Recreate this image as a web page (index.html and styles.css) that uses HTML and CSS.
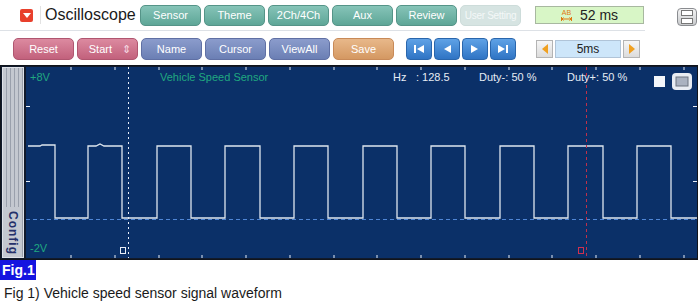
FILE: index.html
```
<html>
    <head>
        <link rel="stylesheet" href="styles.css">
    </head>
    <body>
        <div class="toolbar">
            <div class="row row-top">
                <span class="menu-icon"><span class="tri"></span></span>
                <span class="title">Oscilloscope</span>
                <span class="btn teal">Sensor</span>
                <span class="btn teal">Theme</span>
                <span class="btn teal">2Ch/4Ch</span>
                <span class="btn teal">Aux</span>
                <span class="btn teal">Review</span>
                <span class="btn faded">User Setting</span>
                <span class="ab-box"><span class="ab"><span>AB</span><svg width="11" height="4" viewBox="0 0 11 4"><path d="M0.5 0v4 M10.5 0v4 M1 2h9 M2.5 0.5 L1 2 L2.5 3.5 M8.5 0.5 L10 2 L8.5 3.5" stroke="#e07810" fill="none" stroke-width="1"/></svg></span>52 ms</span>
                <span class="win-icon"><span></span><span></span></span>
            </div>
            <div class="row row-bottom">
                <span class="btn pink">Reset</span>
                <span class="btn pink start">Start <span class="updown">&#8661;</span></span>
                <span class="btn slate">Name</span>
                <span class="btn slate">Cursor</span>
                <span class="btn slate">ViewAll</span>
                <span class="btn orange">Save</span>
                <div class="nav">
                    <span class="nav-btn"><svg width="12" height="10" viewBox="0 0 12 10"><rect x="1" y="1" width="2" height="8" fill="#fff"/><path d="M11 1 L4 5 L11 9 Z" fill="#fff"/></svg></span>
                    <span class="nav-btn"><svg width="12" height="10" viewBox="0 0 12 10"><path d="M10 1 L3 5 L10 9 Z" fill="#fff"/></svg></span>
                    <span class="nav-btn"><svg width="12" height="10" viewBox="0 0 12 10"><path d="M2 1 L9 5 L2 9 Z" fill="#fff"/></svg></span>
                    <span class="nav-btn"><svg width="12" height="10" viewBox="0 0 12 10"><path d="M1 1 L8 5 L1 9 Z" fill="#fff"/><rect x="9" y="1" width="2" height="8" fill="#fff"/></svg></span>
                </div>
                <div class="time">
                    <span class="arrow-btn"><svg width="8" height="12" viewBox="0 0 8 12"><path d="M7 1 L1 6 L7 11 Z" fill="#f0a020"/></svg></span>
                    <span class="time-val">5ms</span>
                    <span class="arrow-btn"><svg width="8" height="12" viewBox="0 0 8 12"><path d="M1 1 L7 6 L1 11 Z" fill="#f0a020"/></svg></span>
                </div>
            </div>
        </div>
        <div class="scope">
            <div class="config"><span>Config</span></div>
            <div class="plot">
                <svg width="671" height="191" viewBox="0 0 671 191">
                    <g stroke="#e8eef8" stroke-width="1">
                        <path d="M45 0v3 M89 0v3 M133 0v3 M176 0v3 M220 0v3 M264 0v3 M308 0v3 M351 0v3 M395 0v3 M439 0v3 M483 0v3 M526 0v3 M570 0v3 M614 0v3 M658 0v3"/>
                        <path d="M45 191v-3 M89 191v-3 M133 191v-3 M176 191v-3 M220 191v-3 M264 191v-3 M308 191v-3 M351 191v-3 M395 191v-3 M439 191v-3 M483 191v-3 M526 191v-3 M570 191v-3 M614 191v-3 M658 191v-3"/>
                        <path d="M0 39.5h4 M0 114.5h4 M671 39.5h-4 M671 114.5h-4"/>
                    </g>
                    <line x1="0" y1="152.5" x2="671" y2="152.5" stroke="#4f86d6" stroke-dasharray="4 3"/>
                    <path d="M2 79 H14 L16 78 H29 V151 H62 V79 H70 L74 77 L78 79 H96 V151 H131 V79 H165 V151 H199 V79 H234 V151 H268 V79 H302 V151 H337 V79 H371 V151 H405 V79 H439 V151 H474 V79 H508 V151 H542 V79 H577 V151 H611 V79 H645 V151 H671" fill="none" stroke="#dfe6ee" stroke-width="1.3"/>
                    <line x1="102.5" y1="0" x2="102.5" y2="191" stroke="#e8eef8" stroke-dasharray="2 3"/>
                    <line x1="560.5" y1="0" x2="560.5" y2="191" stroke="#c0304a" stroke-dasharray="3 3"/>
                    <rect x="94.5" y="180.5" width="5" height="6" fill="none" stroke="#e8eef8"/>
                    <rect x="552.5" y="180.5" width="5" height="6" fill="none" stroke="#d03050"/>
                    <text x="4" y="14" class="green">+8V</text>
                    <text x="134" y="14" class="green">Vehicle Speed Sensor</text>
                    <text x="367" y="14" class="info">Hz</text>
                    <text x="390" y="14" class="info">: 128.5</text>
                    <text x="453" y="14" class="info">Duty-: 50 %</text>
                    <text x="541" y="14" class="info">Duty+: 50 %</text>
                    <text x="4" y="185" class="green">-2V</text>
                    <rect x="628" y="9" width="11" height="11" fill="#f4f6fa"/>
                    <rect x="646" y="6" width="20" height="17" rx="4" fill="#e8ecf2"/>
                    <rect x="650" y="10" width="12" height="9" fill="#aab2c0" stroke="#6c7480"/>
                </svg>
            </div>
        </div>
        <div class="fig">Fig.1</div>
        <p class="caption">Fig 1) Vehicle speed sensor signal waveform</p>
    </body>
</html>
```
FILE: styles.css
```
body{
    margin: 0;
    background-color: #fff;
    font-family: "Liberation Sans", Arial, sans-serif;
    width: 700px;
    height: 305px;
    overflow: hidden;
}
.toolbar{
    height: 65px;
}
.row{
    display: flex;
    align-items: center;
}
.row-top{
    height: 30px;
    width: 645px;
    border-bottom: 1px solid #dde1e6;
    position: relative;
}
.row-bottom{
    height: 30px;
    padding-left: 13px;
    padding-top: 3px;
}
.menu-icon{
    width: 13px;
    height: 13px;
    margin-left: 20px;
    background: #e8402c;
    border-radius: 2px;
    display: flex;
    justify-content: center;
    align-items: center;
}
.tri{
    width: 0;
    height: 0;
    border-left: 4px solid transparent;
    border-right: 4px solid transparent;
    border-top: 5px solid #fff;
}
.title{
    font-size: 16px;
    color: #1a1a1a;
    margin-left: 7px;
    padding-left: 4px;
    border-left: 1px solid #e2e2e2;
    width: 95px;
    white-space: nowrap;
}
.btn{
    height: 21px;
    width: 61px;
    margin-right: 3px;
    border-radius: 5px;
    display: flex;
    justify-content: center;
    align-items: center;
    font-size: 11px;
    color: #fff;
    box-sizing: border-box;
    white-space: nowrap;
}
.teal{
    background: linear-gradient(#86c4b8, #5ea697);
    border: 1px solid #559488;
}
.faded{
    background: #d6e4e2;
    color: #f4f8f8;
    border: 1px solid #cddcda;
    font-size: 10px;
    letter-spacing: -0.3px;
}
.pink{
    background: linear-gradient(#dc8aa0, #c2617c);
    border: 1px solid #b05670;
    height: 22px;
}
.slate{
    background: linear-gradient(#8b9ccc, #6b7fb4);
    border: 1px solid #6070a4;
    height: 22px;
}
.orange{
    background: linear-gradient(#e8b88a, #d49862);
    border: 1px solid #c88a58;
    height: 22px;
}
.start{
    justify-content: flex-end;
    padding-right: 6px;
}
.updown{
    margin-left: 10px;
    font-size: 11px;
    color: #f6dce4;
}
.ab-box{
    margin-left: 11px;
    width: 109px;
    height: 18px;
    background: #d8f6c6;
    border: 1px solid #a8b8a0;
    box-sizing: border-box;
    display: flex;
    align-items: center;
    font-size: 14px;
    color: #222;
    padding-left: 25px;
}
.ab{
    display: flex;
    flex-direction: column;
    align-items: center;
    font-size: 7px;
    color: #e07810;
    line-height: 7px;
    margin-right: 8px;
    gap: 1px;
}
.win-icon{
    position: absolute;
    left: 677px;
    top: 8px;
    width: 20px;
    height: 18px;
    border-radius: 4px;
    background: linear-gradient(#f4f4f4, #c8cacc);
    border: 1px solid #8a8c90;
    box-sizing: border-box;
    display: flex;
    flex-direction: column;
    justify-content: center;
    gap: 2px;
    padding: 0 3px;
}
.win-icon span{
    height: 4px;
    border: 1px solid #777;
    background: #fff;
}
.nav{
    display: flex;
    gap: 2px;
    margin-left: 9px;
}
.nav-btn{
    width: 26px;
    height: 22px;
    border-radius: 4px;
    background: linear-gradient(#5fa2e6, #2f74c4);
    border: 1px solid #2a66ac;
    box-sizing: border-box;
    display: flex;
    justify-content: center;
    align-items: center;
}
.time{
    display: flex;
    margin-left: 20px;
    gap: 2px;
    height: 18px;
}
.arrow-btn{
    width: 17px;
    height: 18px;
    background: linear-gradient(#f6f6f6, #dcdcdc);
    border: 1px solid #b4b4b4;
    box-sizing: border-box;
    display: flex;
    justify-content: center;
    align-items: center;
}
.time-val{
    width: 66px;
    height: 18px;
    background: #cde6fa;
    border: 1px solid #b0c4d8;
    box-sizing: border-box;
    display: flex;
    justify-content: center;
    align-items: center;
    font-size: 12px;
    color: #222;
}
.scope{
    display: flex;
    width: 698px;
    height: 195px;
    background: #111a2c;
    border: 1px solid #10141c;
    box-sizing: border-box;
}
.config{
    width: 20px;
    margin: 1px 2px 1px 1px;
    background: repeating-linear-gradient(90deg, #c4c8d0 0px, #c4c8d0 3px, #9aa0ac 3px, #9aa0ac 4px);
    border: 1px solid #dfe2e8;
    display: flex;
    align-items: flex-end;
    justify-content: center;
}
.config span{
    writing-mode: vertical-rl;
    font-size: 12px;
    font-weight: bold;
    letter-spacing: 1px;
    color: #24306a;
    background: #c4c8d0;
    padding: 4px 0 2px 0;
}
.plot{
    width: 671px;
    height: 191px;
    margin-top: 1px;
    background: #0b3068;
}
.green{
    fill: #20a880;
    font-size: 11px;
    font-family: "Liberation Sans", Arial, sans-serif;
}
.info{
    fill: #e6ecf4;
    font-size: 11px;
    font-family: "Liberation Sans", Arial, sans-serif;
}
.fig{
    width: 36px;
    height: 20px;
    background: #1414e0;
    color: #fff;
    font-weight: bold;
    font-size: 14px;
    line-height: 20px;
    padding-left: 2px;
    box-sizing: border-box;
}
.caption{
    margin: 5px 0 0 4px;
    font-size: 14px;
    color: #1a1a1a;
}
```
